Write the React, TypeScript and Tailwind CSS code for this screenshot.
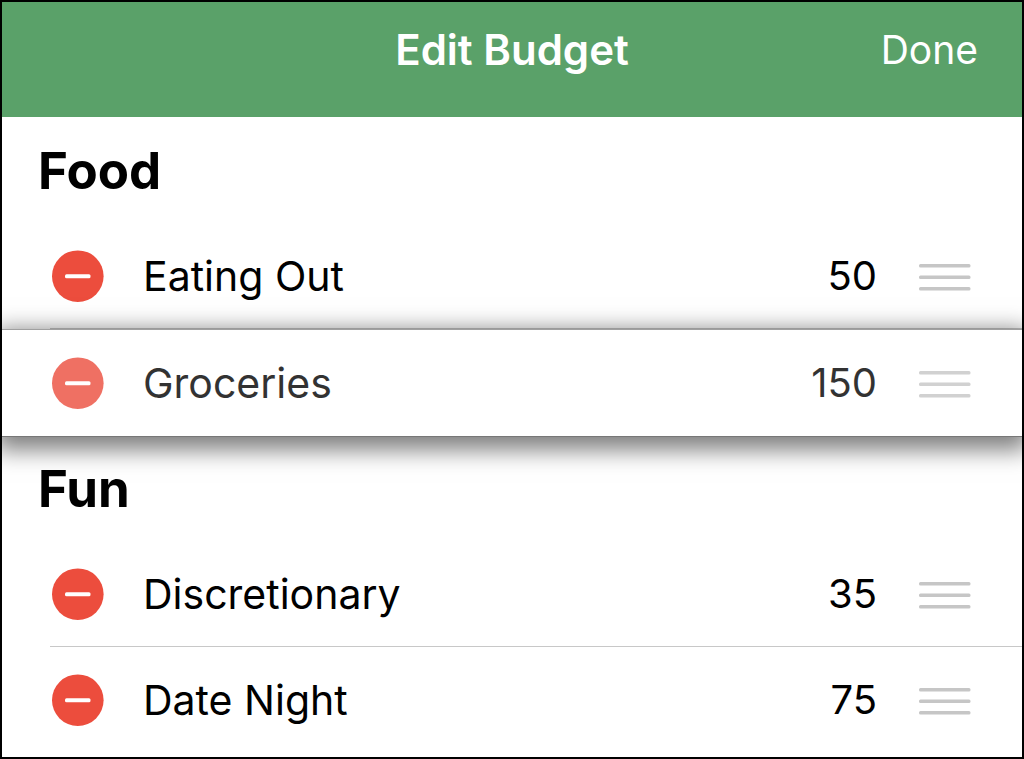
type Item = {
  name: string;
  amount: number;
  dragging?: boolean;
};

type Section = {
  title: string;
  items: Item[];
};

const sections: Section[] = [
  {
    title: 'Food',
    items: [
      { name: 'Eating Out', amount: 50 },
      { name: 'Groceries', amount: 150, dragging: true },
    ],
  },
  {
    title: 'Fun',
    items: [
      { name: 'Discretionary', amount: 35 },
      { name: 'Date Night', amount: 75 },
    ],
  },
];

function RemoveIcon() {
  return (
    <svg viewBox="0 0 52 52" className="size-[52px]" aria-hidden="true">
      <circle cx="25.8" cy="26.2" r="25.8" fill="#ec4d3d" />
      <rect x="13" y="24.2" width="25.5" height="4" rx="1.5" fill="#fff" />
    </svg>
  );
}

function HandleIcon() {
  return (
    <svg viewBox="0 0 52 32" className="h-8 w-[52px]" aria-hidden="true">
      <g fill="#c6c6c6">
        <rect x="0" y="4" width="51.5" height="3.6" rx="1.5" />
        <rect x="0" y="15.5" width="51.5" height="3.6" rx="1.5" />
        <rect x="0" y="27" width="51.5" height="3.6" rx="1.5" />
      </g>
    </svg>
  );
}

function Header() {
  return (
    <header className="grid h-[115px] grid-cols-[1fr_auto_1fr] items-start bg-[#5aa169] px-11 pt-6 leading-12 text-white">
      <h1 className="col-start-2 text-[42px] font-semibold">Edit Budget</h1>
      <button
        type="button"
        className="cursor-pointer justify-self-end text-[39px]"
      >
        Done
      </button>
    </header>
  );
}

function BudgetRow({ item, last }: { item: Item; last: boolean }) {
  const fade = item.dragging ? 'opacity-80' : '';

  return (
    <li
      className={
        item.dragging
          ? 'relative z-10 border-y border-t-[#a0a0a0] border-b-[#777777] bg-white pl-12 shadow-[0_7px_22px_6px_rgba(0,0,0,0.5)]'
          : 'pl-12'
      }
    >
      <div
        className={`flex items-center pr-[51px] ${
          item.dragging ? 'h-[106px]' : 'h-[105px]'
        } ${last ? '' : 'border-b border-[#c8c8c8]'}`}
      >
        <button
          type="button"
          aria-label={`Remove ${item.name}`}
          className={`mr-[39px] ml-0.5 cursor-pointer ${fade}`}
        >
          <RemoveIcon />
        </button>
        <span className={`flex-1 text-[41px] ${fade}`}>{item.name}</span>
        <span className={`text-[40px] ${fade}`}>{item.amount}</span>
        <button
          type="button"
          aria-label={`Move ${item.name}`}
          className={`ml-[42px] cursor-grab ${fade}`}
        >
          <HandleIcon />
        </button>
      </div>
    </li>
  );
}

export default function App() {
  return (
    <div className="flex min-h-screen flex-col overflow-hidden border-2 border-black bg-white font-['Inter',sans-serif] text-black">
      <Header />
      <main className="pt-0.5">
        {sections.map((section) => (
          <section key={section.title}>
            <h2 className="flex h-[105px] items-center pb-0.5 pl-9 text-[51px] leading-12 font-bold">
              {section.title}
            </h2>
            <ul className="leading-12">
              {section.items.map((item, index) => (
                <BudgetRow
                  key={item.name}
                  item={item}
                  last={index === section.items.length - 1}
                />
              ))}
            </ul>
          </section>
        ))}
      </main>
    </div>
  );
}
